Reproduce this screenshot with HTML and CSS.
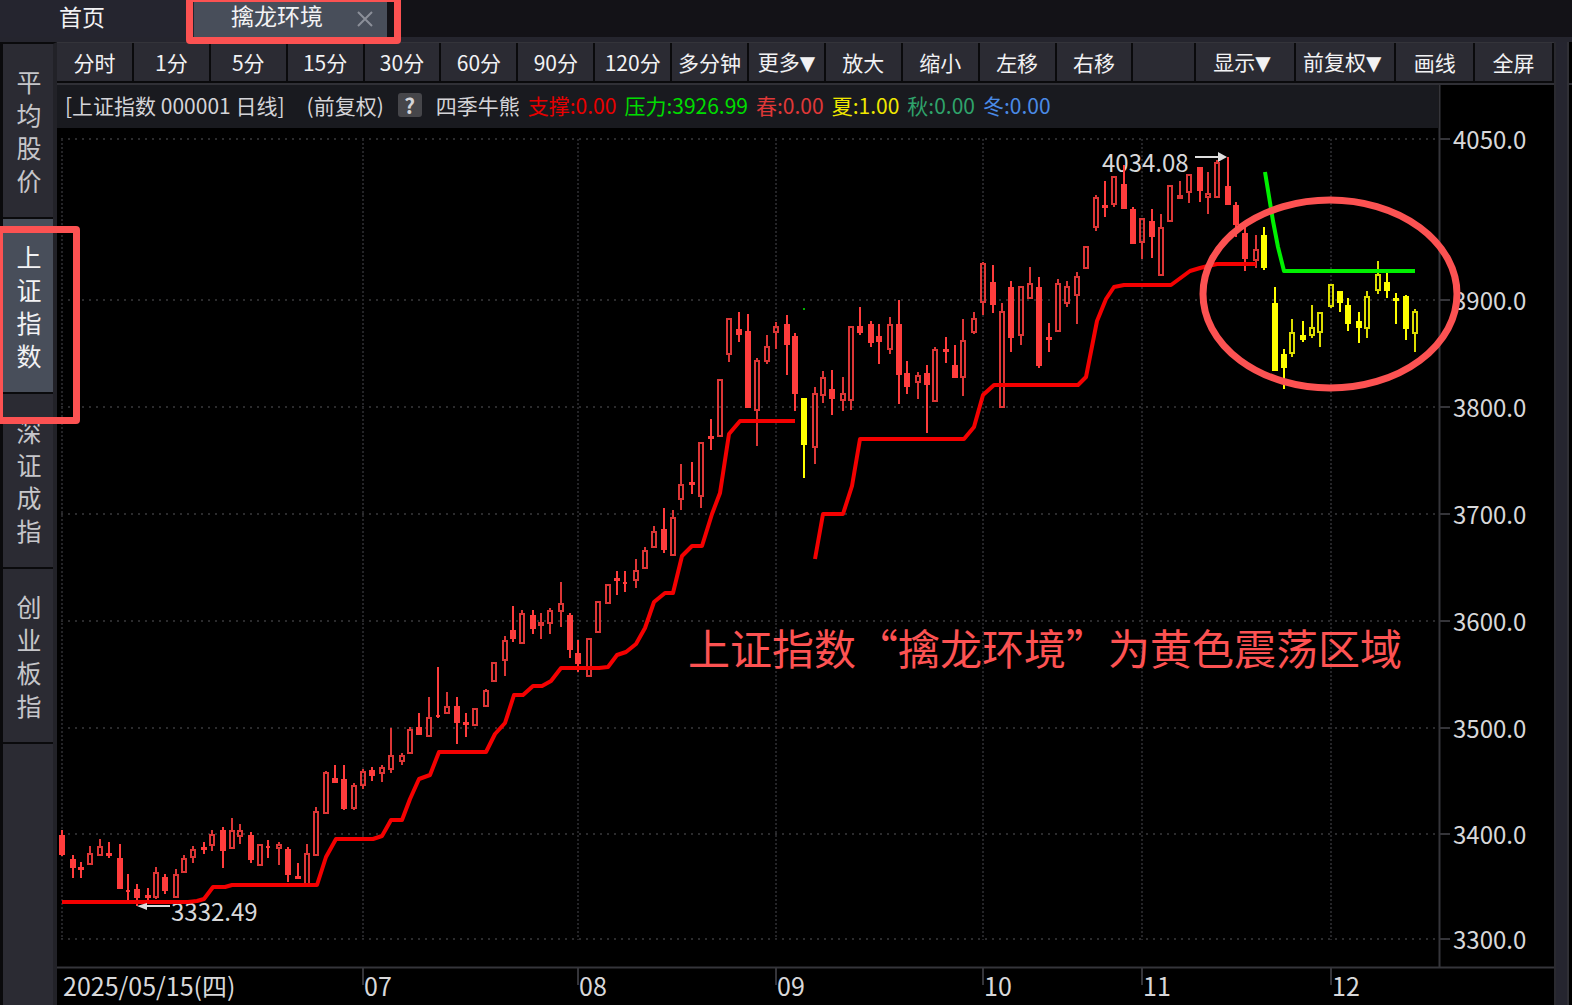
FILE: index.html
```html
<!DOCTYPE html>
<html lang="zh-CN">
<head>
<meta charset="utf-8">
<meta name="viewport" content="width=device-width, initial-scale=1">
<title>擒龙环境 - 上证指数</title>
<link rel="stylesheet" href="styles.css">
</head>
<body>
<div class="app">
  <header class="tabs">
    <button class="tab tab-home" type="button">首页</button>
    <div class="tab tab-active">
      <button class="tab-name" type="button">擒龙环境</button>
      <button class="tab-close" type="button" aria-label="关闭">
        <svg width="16" height="16" viewBox="0 0 16 16"><path d="M1 1L15 15M15 1L1 15" stroke="#8b8f99" stroke-width="2" fill="none"/></svg>
      </button>
      <span class="mark mark-tab"></span>
    </div>
  </header>

  <div class="body">
    <nav class="side">
      <button class="side-item" type="button"><span class="side-text">平均股价</span></button>
      <button class="side-item is-active" type="button"><span class="side-text">上证指数</span><span class="mark mark-side"></span></button>
      <button class="side-item" type="button"><span class="side-text">深证成指</span></button>
      <button class="side-item" type="button"><span class="side-text">创业板指</span></button>
    </nav>

    <main class="main">
      <div class="toolbar">
        <button class="tool" type="button">分时</button>
        <button class="tool" type="button">1分</button>
        <button class="tool" type="button">5分</button>
        <button class="tool" type="button">15分</button>
        <button class="tool" type="button">30分</button>
        <button class="tool" type="button">60分</button>
        <button class="tool" type="button">90分</button>
        <button class="tool" type="button">120分</button>
        <button class="tool" type="button">多分钟</button>
        <button class="tool" type="button">更多<span class="caret">▼</span></button>
        <button class="tool" type="button">放大</button>
        <button class="tool" type="button">缩小</button>
        <button class="tool" type="button">左移</button>
        <button class="tool" type="button">右移</button>
        <span class="tool-space"></span>
        <button class="tool tool-wide" type="button">显示<span class="caret">▼</span></button>
        <button class="tool tool-wide" type="button">前复权<span class="caret">▼</span></button>
        <button class="tool tool-end" type="button">画线</button>
        <button class="tool tool-end" type="button">全屏</button>
      </div>

      <section class="chart">
        <svg class="plot" viewBox="57 85 1497 920" role="img" aria-label="上证指数日线">
          <g id="grid" class="grid"></g>
          <g class="axis">
            <path d="M1439.5 85V967M57 967.5H1554"/>
            <g id="ticks"></g>
          </g>
          <g id="labels" class="label"></g>
          <g class="label">
            <text x="1102" y="172">4034.08</text>
            <text x="171" y="921">3332.49</text>
          </g>
          <g id="candles"></g>
          <polyline class="support" points="62,902 188,902 197,901 204,899 213,887 225,887 232,885 317,885 326,857 336,839 373,839 382,836 391,820 402,820 410,799 419,779 430,775 439,752 486,752 495,734 505,723 514,695 523,695 533,686 542,686 551,681 561,668 599,668 608,667 617,655 626,652 636,644 645,628 654,602 665,593 673,593 682,556 692,546 702,546 712,514 720,493 729,434 740,421 795,421"/>
          <polyline class="support" points="815,559 823,514 843,514 852,486 860,439 964,439 974,427 983,395 994,385 1078,385 1086,377 1097,321 1106,299 1114,287 1124,285 1171,285 1190,271 1200,268 1208,266 1217,264 1256,264"/>
          <polyline class="pressure" points="1265,172 1273,221 1278,247 1284,271 1415,271"/>
          <rect x="803" y="308" width="2" height="2" fill="#00b000"/>
          <g class="pointer">
            <path d="M1195 157H1220M144 906H170"/>
            <path class="head" d="M1218 152L1227 157L1218 162ZM137 906L147 903V910Z"/>
          </g>
          <ellipse class="ring" cx="1330" cy="294" rx="127" ry="94"/>
          <text class="note" x="688" y="665">上证指数“擒龙环境”为黄色震荡区域</text>
        </svg>

        <div class="info">
          <span>[上证指数 000001 日线]</span>
          <span class="adjust">(前复权)</span>
          <button class="help" type="button">?</button>
          <span class="values">
            <span>四季牛熊</span>
            <span class="c-support">支撑:0.00</span>
            <span class="c-pressure">压力:3926.99</span>
            <span class="c-spring">春:0.00</span>
            <span class="c-summer">夏:1.00</span>
            <span class="c-autumn">秋:0.00</span>
            <span class="c-winter">冬:0.00</span>
          </span>
        </div>
      </section>
    </main>

    <aside class="edge"><div class="edge-head"></div></aside>
  </div>
</div>
<script src="chart.js"></script>
</body>
</html>
```

FILE: styles.css
```css
* { box-sizing: border-box; }

body {
  margin: 0;
  background: #000;
  color: #e4e4e6;
  font-family: "Noto Sans CJK SC", "Noto Sans", sans-serif;
  font-size: 21px;
}

button {
  margin: 0;
  padding: 0;
  border: 0;
  background: none;
  color: inherit;
  font: inherit;
}

.app {
  min-height: 100vh;
  display: flex;
  flex-direction: column;
}

/* tab strip */
.tabs {
  height: 42px;
  display: flex;
  background: #131217;
  border-bottom: 5px solid #25252e;
  color: #f2f2f4;
  font-size: 23px;
  line-height: 32px;
}

.tab-home {
  width: 194px;
  padding: 0 30px 8px 0;
  background: #25252f;
}

.tab-active {
  position: relative;
  width: 193px;
  display: flex;
  align-items: center;
  justify-content: space-between;
  padding: 0 14px 0 37px;
  background: #484e5a;
}

.tab-name { padding-bottom: 8px; }

.tab-close { display: flex; }

.mark {
  position: absolute;
  z-index: 2;
  border: 7px solid #fc5252;
  border-radius: 4px;
}

.mark-tab {
  top: -5px;
  bottom: -7px;
  left: -8px;
  right: -14px;
}

.mark-side {
  top: 7px;
  bottom: -32px;
  left: -7px;
  right: -27px;
}

.body {
  flex: 1;
  display: flex;
}

/* market list */
.side {
  width: 57px;
  flex: none;
  display: flex;
  flex-direction: column;
  background: #2b2b33;
  border-left: 3px solid #0a0a0c;
  border-right: 4px solid #222228;
  border-top: 2px solid #0a0a0c;
}

.side-item {
  position: relative;
  height: 175px;
  display: flex;
  align-items: center;
  justify-content: center;
  padding-left: 2px;
  border-bottom: 2px solid #0a0a0c;
  color: #c6c6ca;
  font-size: 25px;
  line-height: 33px;
}

.side-item.is-active {
  background: #484e5a;
  color: #f2f2f4;
}

.side-text { width: 26px; }

.main {
  flex: 1;
  min-width: 0;
  border-right: 2px solid #2a2a30;
}

/* toolbar */
.toolbar {
  height: 43px;
  display: flex;
  background: #2b2b33;
  border-top: 1px solid #34343a;
  border-bottom: 2px solid #303036;
  color: #f2f2f4;
}

.tool,
.tool-space {
  flex: 77 1 0;
  border-right: 2px solid #0a0a0c;
  border-bottom: 2px solid #0a0a0c;
  white-space: nowrap;
  line-height: 36px;
}

.tool-space { flex-grow: 62; }
.tool-wide { flex-grow: 101; }
.tool-end { flex-grow: 79; }

.caret {
  font-family: "DejaVu Sans", sans-serif;
  font-size: 20px;
}

.tool-wide .caret { margin-right: 6px; }

/* chart */
.chart { display: grid; }

.plot,
.info { grid-area: 1 / 1; }

.plot {
  display: block;
  width: 100%;
}

.info {
  align-self: start;
  height: 43px;
  margin-right: 116px;
  padding: 0 0 4px 8px;
  display: flex;
  align-items: center;
  background: #191a1f;
  color: #d4d4d8;
  white-space: nowrap;
}

.adjust { margin-left: 22px; }

.help {
  width: 24px;
  height: 24px;
  margin: 0 14px;
  border-radius: 3px;
  background: #46464a;
  font-weight: 700;
  line-height: 24px;
}

.values {
  display: flex;
  gap: 8px;
}

.c-support { color: #e80000; }
.c-pressure { color: #00dc00; }
.c-spring { color: #e03838; }
.c-summer { color: #f0e800; }
.c-autumn { color: #2fa36b; }
.c-winter { color: #4a8ae6; }

.grid path { stroke: #2b2b2d; stroke-width: 2; fill: none; }
.grid .row { stroke-dasharray: 2 5; }
.grid .col { stroke-dasharray: 2 2; stroke: #242427; }
.axis path { stroke: #35353a; stroke-width: 2; fill: none; }
.label { fill: #d8d8da; font-size: 24px; }
.label .date { font-size: 25px; }

.up { fill: none; stroke: #dc3636; stroke-width: 2; }
.down { fill: #ff3c3c; stroke: #ff3c3c; stroke-width: 2; }
.up.warn { stroke: #dcdc00; }
.down.warn { fill: #ffff00; stroke: #ffff00; }

.support,
.pressure {
  fill: none;
  stroke: #f40000;
  stroke-width: 4;
  stroke-linejoin: round;
}

.pressure { stroke: #00f000; }
.pointer path { stroke: #dedede; stroke-width: 2; }
.pointer .head { fill: #dedede; stroke: none; }
.ring { fill: none; stroke: #fc5252; stroke-width: 7; }
.note { fill: #fc5252; font-size: 42px; }

/* neighbouring panel */
.edge {
  width: 16px;
  flex: none;
  border-left: 11px solid #25252f;
  background: #000;
  box-shadow: inset 2px 0 #303036;
}

.edge-head {
  height: 43px;
  border-bottom: 2px solid #303036;
}
```

FILE: chart.js
```js
// x, high, body top, body bottom, low, kind (u: rising, d: falling)
const candles = `62 830 835 855 856 d;73 855 859 868 878 d;81 862 867 870 878 d;90 846 853 865 865 u;100 839 846 856 856 u
109 842 853 856 858 d;120 844 858 889 889 d;128 874 890 891 900 d;137 884 889 898 906 d;148 888 895 898 900 d
156 867 872 898 899 u;165 874 877 891 894 d;176 869 874 898 898 u;184 855 858 873 873 u;193 846 849 858 863 u
204 842 847 850 854 d;212 830 834 846 851 u;223 827 830 851 868 d;232 818 830 849 849 u;240 824 830 837 844 u
251 832 835 860 863 d;260 844 844 866 866 u;268 840 846 847 858 d;279 842 844 849 865 u;288 847 849 875 882 d
298 863 876 879 879 d;307 844 853 887 887 u;316 807 811 856 856 u;326 771 772 814 814 u;335 765 778 783 783 d
344 765 779 809 810 d;354 783 785 809 810 u;363 769 771 786 789 u;372 767 770 776 781 d;382 765 767 774 782 u
391 728 755 770 773 u;402 753 755 762 765 u;410 727 729 754 754 u;419 713 727 735 735 d;429 697 717 737 737 u
438 667 715 716 718 d;447 692 706 714 714 u;457 697 706 723 744 d;466 713 722 725 737 d;475 708 708 726 726 u
486 689 690 707 707 u;494 662 662 682 682 u;505 636 640 661 676 u;513 606 630 639 642 d;522 610 613 644 644 u
533 610 615 629 634 d;541 613 622 626 639 u;550 608 610 624 634 u;561 582 603 612 627 u;570 613 615 650 658 d
578 640 653 664 672 d;589 638 638 677 677 u;598 601 601 633 633 u;608 584 584 604 604 u;617 571 578 581 595 d
625 571 582 583 592 d;636 559 570 581 588 u;645 547 550 569 569 u;654 526 531 548 548 u;664 508 529 550 553 d
673 510 517 556 556 u;681 464 484 500 510 u;692 462 482 485 494 d;701 442 442 497 508 u;711 419 436 439 450 d
720 379 379 437 437 u;729 318 318 355 362 u;739 312 329 335 342 d;748 314 331 408 408 d;757 358 360 411 446 u
767 335 346 362 364 u;776 322 326 333 349 u;787 315 324 345 375 d;795 333 336 394 411 d;804 398 398 445 478 d w
815 387 393 448 464 u;823 371 377 396 403 u;832 370 389 399 415 d;843 377 393 401 411 u;851 326 326 401 410 u
860 307 326 333 335 d;871 321 324 343 347 d;879 324 336 342 364 d;890 317 324 350 354 u;899 300 324 375 404 d
907 361 373 387 394 d;918 372 375 383 399 u;927 365 373 385 433 d;935 347 349 402 402 u;946 337 349 352 363 d
955 345 365 378 378 d;963 319 340 378 396 u;974 312 318 333 334 u;983 262 263 303 315 u;993 265 282 305 313 d
1002 303 311 408 408 u;1011 281 287 338 352 d;1021 286 286 336 345 u;1030 267 283 299 299 u;1039 277 287 366 368 d
1049 323 337 340 352 d;1058 279 283 332 332 u;1067 281 286 304 307 u;1077 272 276 296 324 u;1086 246 246 269 269 u
1096 195 197 228 231 u;1105 181 205 208 217 d;1114 176 176 205 207 u;1124 165 184 209 209 d;1133 207 209 244 244 d
1142 218 218 243 259 u;1152 209 221 237 258 d;1161 214 227 276 276 u;1170 185 185 222 222 u;1180 181 195 199 199 u
1189 174 174 193 203 u;1200 167 167 191 202 d;1208 172 193 198 214 u;1217 160 162 198 198 u;1228 157 186 205 205 d
1236 202 205 225 237 d;1245 227 233 259 271 d;1256 235 249 261 268 u;1264 227 235 268 270 d w;1275 287 303 371 371 d w
1284 349 354 368 389 d w;1292 319 332 354 357 u w;1303 321 335 340 342 d w;1312 305 327 336 338 u w;1320 312 312 333 347 u w
1331 284 284 307 308 u w;1340 291 291 303 312 d w;1348 298 305 324 331 d w;1359 312 321 328 343 d w;1367 291 296 329 338 u w
1378 261 274 291 294 u w;1387 273 282 291 298 d w;1396 293 298 301 324 d w;1406 295 296 329 340 d w;1415 309 311 334 352 u w`;

const prices = [["4050.0", 139], ["3900.0", 300], ["3800.0", 407], ["3700.0", 514], ["3600.0", 621], ["3500.0", 728], ["3400.0", 834], ["3300.0", 939]];
const dates = [["2025/05/15(四)", 62], ["07", 363], ["08", 578], ["09", 776], ["10", 983], ["11", 1142], ["12", 1331]];

const fill = (id, html) => { document.getElementById(id).innerHTML = html; };

fill("candles", candles.split(/[;\n]/).map((row) => {
  const [x, high, top, bottom, low, kind, warn] = row.trim().split(" ");
  const cls = (kind === "u" ? "up" : "down") + (warn ? " warn" : "");
  const t = +top + 1;
  const b = Math.max(+bottom - 1, t);
  return `<path class="${cls}" d="M${x} ${high}V${t}M${x} ${b}V${low}M${x - 2} ${t}H${+x + 2}V${b}H${x - 2}Z"/>`;
}).join(""));

fill("grid",
  prices.map(([, y]) => `<path class="row" d="M61 ${y}H1438"/>`).join("") +
  dates.map(([, x]) => `<path class="col" d="M${x} 139V940"/>`).join(""));

fill("ticks",
  prices.map(([, y]) => `<path d="M1440 ${y}H1450"/>`).join("") +
  dates.slice(1).map(([, x]) => `<path d="M${x} 968V985"/>`).join(""));

fill("labels",
  prices.map(([text, y]) => `<text x="1453" y="${y + 10}">${text}</text>`).join("") +
  dates.map(([text, x]) => `<text class="date" x="${x + 1}" y="996">${text}</text>`).join(""));
```
